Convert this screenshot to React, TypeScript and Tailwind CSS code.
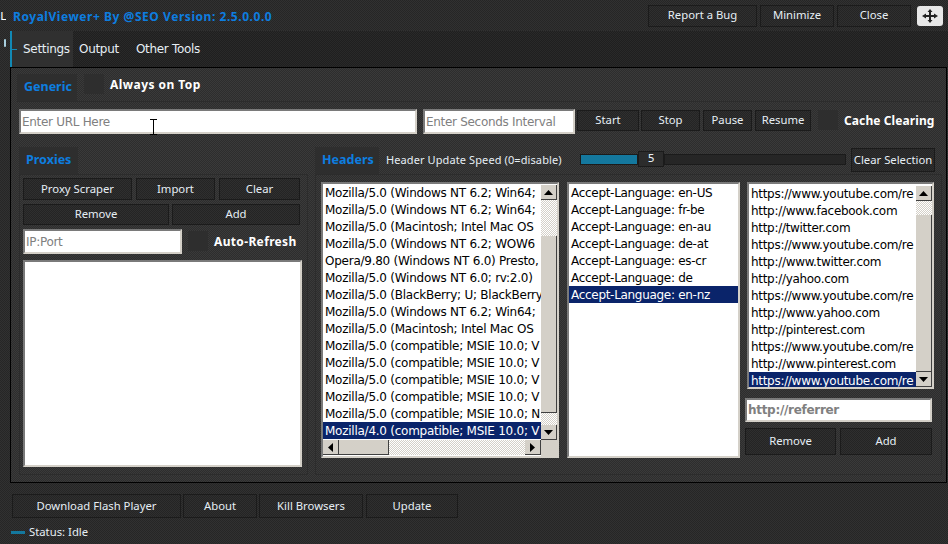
import type { ReactNode } from "react";

const uaList = [
  "Mozilla/5.0 (Windows NT 6.2; Win64;",
  "Mozilla/5.0 (Windows NT 6.2; Win64;",
  "Mozilla/5.0 (Macintosh; Intel Mac OS",
  "Mozilla/5.0 (Windows NT 6.2; WOW6",
  "Opera/9.80 (Windows NT 6.0) Presto,",
  "Mozilla/5.0 (Windows NT 6.0; rv:2.0)",
  "Mozilla/5.0 (BlackBerry; U; BlackBerry",
  "Mozilla/5.0 (Windows NT 6.2; Win64;",
  "Mozilla/5.0 (Macintosh; Intel Mac OS",
  "Mozilla/5.0 (compatible; MSIE 10.0; V",
  "Mozilla/5.0 (compatible; MSIE 10.0; V",
  "Mozilla/5.0 (compatible; MSIE 10.0; V",
  "Mozilla/5.0 (compatible; MSIE 10.0; V",
  "Mozilla/5.0 (compatible; MSIE 10.0; N",
  "Mozilla/4.0 (compatible; MSIE 10.0; V",
];

const langList = ["en-US", "fr-be", "en-au", "de-at", "es-cr", "de", "en-nz"].map((l) => `Accept-Language: ${l}`);

const refList = [
  "https://www.youtube.com/re",
  "http://www.facebook.com",
  "http://twitter.com",
  "https://www.youtube.com/re",
  "http://www.twitter.com",
  "http://yahoo.com",
  "https://www.youtube.com/re",
  "http://www.yahoo.com",
  "http://pinterest.com",
  "https://www.youtube.com/re",
  "http://www.pinterest.com",
  "https://www.youtube.com/re",
];

const dither = "bg-[repeating-conic-gradient(#ffffff_0_25%,#d4d0c8_0_50%)] bg-[length:2px_2px]";
const sunken = "border-2 border-[#7a7a7a] border-b-[#d4d0c8] border-r-[#d4d0c8] bg-white";
const tabTitle = "flex shrink-0 items-center bg-[#2e2e2e] pl-[7px] font-['Noto_Sans',sans-serif] text-[12.5px] font-bold tracking-normal text-[#0d7ee0]";
const boldLabel = "whitespace-nowrap font-['Noto_Sans',sans-serif] text-[12px] font-bold text-white";

const Btn = ({ className, children }: { className: string; children: ReactNode }) => (
  <div className={`flex shrink-0 items-center justify-center whitespace-nowrap border border-[#1b1b1b] bg-[repeating-conic-gradient(#2f2f2f_0_25%,#242424_0_50%)] bg-[length:2px_2px] font-['Noto_Sans',sans-serif] text-[11.3px] tracking-normal text-[#e6eef4] ${className}`}>
    {children}
  </div>
);

const Check = ({ className }: { className: string }) => <div className={`h-5 w-5 shrink-0 bg-[#2e2e2e] ${className}`} />;

const Arrow = ({ dir }: { dir: "up" | "down" | "left" | "right" }) => {
  const pts = { up: "0,5 9,5 4.5,0", down: "0,0 9,0 4.5,5", left: "5,0 5,9 0,4.5", right: "0,0 0,9 5,4.5" }[dir];
  const box = dir === "up" || dir === "down" ? "w-[9px] h-[5px]" : "w-[5px] h-[9px]";
  const vb = dir === "up" || dir === "down" ? "0 0 9 5" : "0 0 5 9";
  return (
    <div className="flex h-full w-full items-center justify-center border-b border-r border-[#404040] bg-[#d4d0c8]">
      <svg viewBox={vb} className={box}>
        <polygon points={pts} fill="#000" />
      </svg>
    </div>
  );
};

const VScroll = ({ top, thumb, bottom }: { top: number; thumb: number; bottom: number }) => (
  <div className="mt-[1px] flex w-4 shrink-0 flex-col">
    <div className="h-[15px] shrink-0"><Arrow dir="up" /></div>
    <div className={dither} style={{ height: top }} />
    <div className="shrink-0 border-b border-r border-[#404040] bg-[#d4d0c8]" style={{ height: thumb }} />
    <div className={dither} style={{ height: bottom }} />
    <div className="h-[15px] shrink-0"><Arrow dir="down" /></div>
  </div>
);

const Rows = ({ items, selected, className = "" }: { items: string[]; selected: number; className?: string }) => (
  <div className={`min-w-0 flex-1 overflow-hidden text-black ${className}`}>
    {items.map((item, i) => (
      <div key={i} className={`h-[17px] overflow-hidden whitespace-nowrap pl-[2px] leading-[19px] ${i === selected ? "bg-[#0a246a] text-white" : ""}`}>
        {item}
      </div>
    ))}
  </div>
);

export default function App() {
  return (
    <div className="flex h-[544px] w-[948px] flex-col overflow-hidden bg-[repeating-conic-gradient(#313131_0_25%,#262626_0_50%)] bg-[length:2px_2px] font-['DejaVu_Sans',sans-serif] text-[12px] tracking-[-0.3px] text-[#e6eef4]">
      {/* title bar */}
      <div className="flex h-[31px] shrink-0 items-center">
        <div className="w-[6px] overflow-hidden pt-[3px] text-right text-[11px] text-white">L</div>
        <div className="ml-[7px] whitespace-nowrap pt-[3px] font-['Noto_Sans',sans-serif] text-[12px] font-bold tracking-[0.55px] text-[#0d7ee0]">RoyalViewer+ By @SEO Version: 2.5.0.0.0</div>
        <div className="ml-auto flex items-center">
          <Btn className="h-[22px] w-[109px]">Report a Bug</Btn>
          <Btn className="ml-[3px] h-[22px] w-[74px]">Minimize</Btn>
          <Btn className="ml-[3px] h-[22px] w-[74px]">Close</Btn>
          <div className="ml-[6px] mr-[5px] flex h-[20px] w-[26px] items-center justify-center rounded-[3px] bg-[#e8e8e8]">
            <svg viewBox="0 0 18 14" className="h-[14px] w-[18px]" fill="#222">
              <path d="M9 0l2.5 3H10v3h3V4.500L17 7l-4 2.500V8h-3v3h1.500L9 14l-2.500-3H8V8H5v1.500L1 7l4-2.500V6h3V3H6.500z" />
            </svg>
          </div>
        </div>
      </div>

      {/* tabs */}
      <div className="flex h-[36px] shrink-0">
        <div className="ml-[4px] mt-[8px] h-[8px] w-[2px] rounded-full bg-[#a8d0e0]" />
        <div className="ml-[4px] flex flex-1 bg-[repeating-conic-gradient(#292929_0_25%,#1f1f1f_0_50%)] bg-[length:2px_2px]">
          <div className="flex w-[63px] items-center border-l-2 border-[#1289b5] bg-[#303030]">
            <div className="h-px w-[5px] bg-[#1289b5]" />
            <span className="ml-[6px]">Settings</span>
          </div>
          <div className="ml-[6px] flex items-center">Output</div>
          <div className="ml-[17px] flex items-center">Other Tools</div>
        </div>
      </div>

      {/* tab page */}
      <div className="ml-[10px] mr-[1px] flex h-[416px] shrink-0 flex-col border border-black bg-[repeating-conic-gradient(#3a3a3a_0_25%,#2d2d2d_0_50%)] bg-[length:2px_2px] px-[6px] pt-[6px]">
        <div className="flex h-[27px] shrink-0">
          <div className={`${tabTitle} w-[60px]`}>Generic</div>
          <Check className="ml-[7px]" />
          <div className={`${boldLabel} ml-[6px] pt-[2px] tracking-[0.45px]`}>Always on Top</div>
        </div>

        <div className="flex h-[46px] shrink-0 items-start border-t border-[#2c2c2c] pl-[2px] pt-[7px]">
          <div className={`${sunken} relative flex h-[25px] w-[398px] shrink-0 items-center pl-[1px] text-[#808080]`}>
            Enter URL Here
            <svg viewBox="0 0 7 16" className="absolute left-[129px] top-[8px] h-4 w-[7px]" fill="none" stroke="#000">
              <path d="M0 .5h7M3.500 .5v15M0 15.500h7" />
            </svg>
          </div>
          <div className={`${sunken} ml-[6px] flex h-[25px] w-[152px] shrink-0 items-center whitespace-nowrap pl-[1px] text-[#808080]`}>
            Enter Seconds Interval
          </div>
          <Btn className="ml-[2px] mt-[1px] h-[21px] w-[62px]">Start</Btn>
          <Btn className="ml-[2px] mt-[1px] h-[21px] w-[59px]">Stop</Btn>
          <Btn className="ml-[3px] mt-[1px] h-[21px] w-[49px]">Pause</Btn>
          <Btn className="ml-[3px] mt-[1px] h-[21px] w-[56px]">Resume</Btn>
          <Check className="ml-[7px] mt-[1px]" />
          <div className={`${boldLabel} ml-[6px] pt-[3px] tracking-[0.1px]`}>Cache Clearing</div>
        </div>

        <div className="flex h-[328px] shrink-0">
          {/* proxies */}
          <div className="ml-[2px] flex w-[289px] shrink-0 flex-col">
            <div className={`${tabTitle} h-[27px] w-[59px]`}>Proxies</div>
            <div className="flex h-[301px] flex-col border border-[#2c2c2c] pl-[3px] pt-[3px]">
              <div className="flex">
                <Btn className="h-[22px] w-[109px]">Proxy Scraper</Btn>
                <Btn className="ml-[4px] h-[22px] w-[79px]">Import</Btn>
                <Btn className="ml-[4px] h-[22px] w-[81px]">Clear</Btn>
              </div>
              <div className="mt-[4px] flex">
                <Btn className="h-[21px] w-[146px]">Remove</Btn>
                <Btn className="ml-[3px] h-[21px] w-[128px]">Add</Btn>
              </div>
              <div className="mt-[4px] flex">
                <div className={`${sunken} flex h-[25px] w-[159px] items-center pl-[1px] text-[#808080]`}>IP:Port</div>
                <Check className="ml-[6px] mt-[2px]" />
                <div className={`${boldLabel} ml-[6px] pt-[4px] tracking-[0.35px]`}>Auto-Refresh</div>
              </div>
              <div className={`${sunken} mt-[6px] h-[207px] w-[279px]`} />
            </div>
          </div>

          {/* headers */}
          <div className="ml-[7px] flex w-[627px] shrink-0 flex-col">
            <div className="flex h-[27px] shrink-0">
              <div className={`${tabTitle} w-[64px]`}>Headers</div>
              <div className="ml-[7px] w-[176px] shrink-0 whitespace-nowrap pt-[5px] font-['Noto_Sans',sans-serif] text-[11px] tracking-[0.1px]">Header Update Speed (0=disable)</div>
              <div className="ml-[18px] mt-[4px] flex h-[16px] w-[266px] shrink-0 items-center">
                <div className="h-[11px] w-[58px] border border-[#1b1b1b] bg-[#14789e]" />
                <div className="flex h-[16px] w-[26px] items-center justify-center border border-[#1b1b1b] bg-[#2c2c2c] text-[11px]">5</div>
                <div className="h-[11px] flex-1 border border-[#1b1b1b] bg-[#262626]" />
              </div>
              <Btn className="ml-[5px] mt-[1px] h-[24px] w-[84px]">Clear Selection</Btn>
            </div>
            <div className="flex h-[301px] border border-[#2c2c2c] pl-[5px] pt-[7px]">
              <div className={`${sunken} flex h-[276px] w-[238px] shrink-0 flex-col`}>
                <div className="flex h-[256px]">
                  <Rows items={uaList} selected={14} className="tracking-[-0.25px]" />
                  <VScroll top={36} thumb={177} bottom={12} />
                </div>
                <div className="flex h-[16px]">
                  <div className="h-[15px] w-4"><Arrow dir="left" /></div>
                  <div className="h-[15px] w-[50px] border-b border-r border-[#404040] bg-[#d4d0c8]" />
                  <div className={`h-[15px] flex-1 ${dither}`} />
                  <div className="h-[15px] w-4"><Arrow dir="right" /></div>
                  <div className="h-[16px] w-4 bg-[#d4d0c8]" />
                </div>
              </div>
              <div className={`${sunken} ml-[8px] h-[276px] w-[173px] shrink-0`}>
                <Rows items={langList} selected={6} />
              </div>
              <div className="ml-[5px] flex w-[188px] shrink-0 flex-col">
                <div className={`${sunken} ml-[2px] flex h-[207px] w-[187px] pt-[1px]`}>
                  <Rows items={refList} selected={11} />
                  <VScroll top={14} thumb={157} bottom={0} />
                </div>
                <div className={`${sunken} mt-[9px] flex h-[24px] w-[187px] items-center pl-[1px] font-bold text-[#808080]`}>http://referrer</div>
                <div className="mt-[6px] flex">
                  <Btn className="h-[27px] w-[91px]">Remove</Btn>
                  <Btn className="ml-[4px] h-[27px] w-[92px]">Add</Btn>
                </div>
              </div>
            </div>
          </div>
        </div>
      </div>

      {/* bottom */}
      <div className="ml-[12px] mt-[11px] flex shrink-0">
        <Btn className="h-[24px] w-[169px]">Download Flash Player</Btn>
        <Btn className="ml-[2px] h-[24px] w-[74px]">About</Btn>
        <Btn className="ml-[2px] h-[24px] w-[104px]">Kill Browsers</Btn>
        <Btn className="ml-[3px] h-[24px] w-[92px]">Update</Btn>
      </div>
      <div className="ml-[11px] mt-[4px] flex h-[20px] items-center font-['Noto_Sans',sans-serif] text-[11.3px] tracking-normal">
        <div className="h-[3px] w-[14px] bg-[#14789e]" />
        <div className="ml-[4px]">Status: Idle</div>
      </div>
    </div>
  );
}
